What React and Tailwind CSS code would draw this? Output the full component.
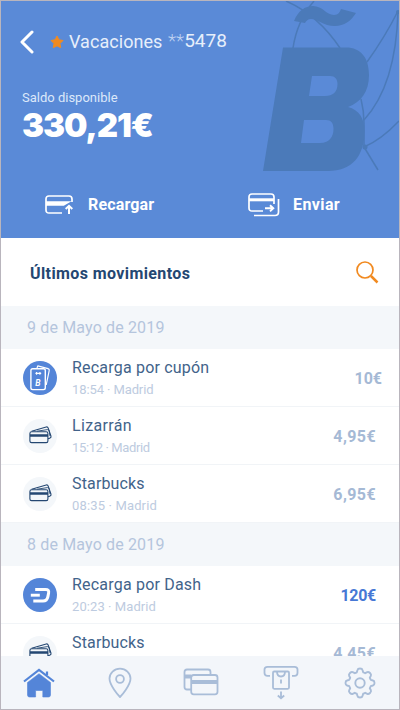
import React from "react";

const movements = [
  {
    date: "9 de Mayo de 2019",
    items: [
      { name: "Recarga por cupón", nameClass: "tracking-[0.2px]", info: "18:54 · Madrid", infoClass: "tracking-[-0.1px]", amount: "10€", icon: "coupon", amountClass: "text-[#a5b9d5] mr-[17px]" },
      { name: "Lizarrán", nameClass: "tracking-[0.35px]", info: "15:12 · Madrid", infoClass: "tracking-[-0.36px]", amount: "4,95€", icon: "card", amountClass: "text-[#a5b9d5] mr-[23px] tracking-[0.4px]" },
      { name: "Starbucks", nameClass: "tracking-[0.15px]", info: "08:35 · Madrid", infoClass: "tracking-[0.15px]", amount: "6,95€", icon: "card", amountClass: "text-[#a5b9d5] mr-[23px] tracking-[0.4px]" },
    ],
  },
  {
    date: "8 de Mayo de 2019",
    items: [
      { name: "Recarga por Dash", nameClass: "tracking-[0.2px]", info: "20:23 · Madrid", infoClass: "tracking-[0.08px]", amount: "120€", icon: "dash", amountClass: "text-[#4778d5] mr-[23px] tracking-[-0.3px]" },
      { name: "Starbucks", nameClass: "tracking-[0.15px]", info: "19:10 · Madrid", infoClass: "tracking-[0px]", amount: "4,45€", icon: "card", amountClass: "text-[#a5b9d5] mr-[23px] tracking-[0.4px]" },
    ],
  },
];

const CouponIcon = () => (
  <svg width="34" height="34" viewBox="0 0 34 34" fill="none" stroke="#fff" strokeLinejoin="round">
    <rect x="7.9" y="7.8" width="14.4" height="20.8" rx="1.8" strokeWidth="1.4" />
    <path d="M14 7L14.8 4.9L25 7.6Q26.6 8.2 26.2 9.7L23.2 24" strokeWidth="1.2" />
    <path d="M12.4 12.4H18.2M13.6 11V13.8M16.9 11V13.8" strokeWidth="1.1" />
    <text x="12.3" y="25" fill="#fff" stroke="none" className="text-[8.5px] font-bold italic">B</text>
  </svg>
);

const CardIcon = () => (
  <svg width="34" height="34" viewBox="0 0 34 34" fill="none" stroke="#244772" strokeWidth="1.1" strokeLinejoin="round">
    <path d="M8.6 12.2L23.2 8Q24.7 7.6 25.2 9.1L28 17.2Q28.4 18.7 26.7 19.2L25 19.8" />
    <path d="M14 12.2L24.5 10.6Q26 10.5 26.2 12L27 17" strokeWidth="0.9" />
    <rect x="6.9" y="12.7" width="18" height="10.9" rx="1.7" fill="#f4f7fa" />
    <path d="M7 16.5H25" strokeWidth="2.5" />
  </svg>
);

const DashIcon = () => (
  <svg width="34" height="34" viewBox="0 0 34 34" fill="none" stroke="#fff" strokeWidth="3" strokeLinejoin="round">
    <path d="M12.2 11.4H22.4Q26.3 11.4 25.6 15L24.9 18.6Q24 23 20 23H10.3" />
    <path d="M7.8 17.2H16.8" strokeWidth="2.9" />
  </svg>
);

const icons = { coupon: CouponIcon, card: CardIcon, dash: DashIcon };

const Pattern = () => (
  <svg className="absolute right-0 top-0" width="137" height="180" viewBox="0 0 137 180" fill="none">
    <g stroke="#4b7ab9" strokeWidth="1.5">
      <path d="M24 0Q56 14 78 47" />
      <path d="M52 0Q35 20 31 47" />
      <path d="M136 10Q123 36 105 61" />
      <path d="M136 10Q134 84 102 119" />
      <path d="M99 98Q102 110 102 122V146Q119 139 137 120" />
      <path d="M102 146L116 169" />
    </g>
    <circle cx="136" cy="11" r="2" fill="#4b7ab9" />
    <circle cx="103" cy="146" r="2.5" fill="#4b7ab9" />
    <g fill="#4b7ab9">
      <path d="M32 20C36 10 43 5 51 5C61 5 64 14 72 14C76 14 78 11 79 8L94 12C89 20 82 25 73 25C61 25 56 18 49 18C46 18 44 20 43 22Z" />
      <path fillRule="evenodd" d="M21 46.500H84C99 46.500 107 57 107 74C107 91 99 101 86 106C97 109 102.500 117 102.500 130C102.500 155 90 170 66 170H1ZM50 75L47 95H63C71 95 75.500 91 75.500 83C75.500 78 73 75 68 75ZM42 119L39 142H58C67 142 71.500 136 71.500 128C71.500 122 69 119 64 119Z" />
    </g>
  </svg>
);

const Header = () => (
  <header className="relative h-[237px] bg-[#5a8ad7] text-white">
    <Pattern />
    <div className="relative flex h-[81px] items-center pl-[19px]">
      <svg width="14" height="24" viewBox="0 0 14 24" fill="none" stroke="#fff" strokeWidth="3" strokeLinecap="round" strokeLinejoin="round">
        <path d="M12 2L2 12L12 22" />
      </svg>
      <svg className="ml-[16px]" width="14" height="14" viewBox="0 0 14 14" fill="#f18a20">
        <path d="M7 1L8.9 4.8L13 5.5L10 8.5L10.7 12.7L7 10.8L3.2 12.7L4 8.5L1 5.5L5.1 4.8Z" stroke="#f18a20" strokeLinejoin="round" />
      </svg>
      <h1 className="ml-[5px] w-[93px] whitespace-nowrap text-[18px] tracking-[0.05px] text-[#e7effb]">Vacaciones</h1>
      <span className="ml-[6px] whitespace-nowrap text-[19px] text-[#e7effb]">
        <span className="font-light text-[#bfd2f2]">**</span>5478
      </span>
    </div>
    <div className="relative pl-[21px] pt-[8px]">
      <p className="text-[13px] leading-4 text-[#dce8fa]">Saldo disponible</p>
      <p className="font-[Inter,sans-serif] text-[33px] font-black leading-[38px] tracking-[-1.05px]">330,21€</p>
    </div>
    <div className="relative mt-[42px] flex h-[38px] items-center pl-[44px] text-base font-bold">
      <svg width="28" height="20" viewBox="0 0 28 20" fill="none" stroke="#fff" strokeWidth="1.7">
        <path d="M17 18H4Q1 18 1 15V4Q1 1 4 1H24Q27 1 27 4V7" />
        <path d="M1 7.5H22L18.5 9.5H1" strokeWidth="2.4" />
        <path d="M24 19V11M20.7 14L24 10.8L27.3 14" strokeWidth="2" />
      </svg>
      <span className="ml-[15px] w-[67px] tracking-[0.15px]">Recargar</span>
      <svg className="ml-[93px]" width="32" height="24" viewBox="0 0 32 24" fill="none" stroke="#fff" strokeWidth="1.7">
        <path d="M15 18H4Q1 18 1 15V4Q1 1 4 1H23Q26 1 26 4V11M30.500 6V19Q30.500 22.500 27 22.500H6" />
        <path d="M1 6.8H26" strokeWidth="3" />
        <path d="M17 15.3H25M22 12.2L25.3 15.3L22 18.4" strokeWidth="1.9" />
      </svg>
      <span className="ml-[13px] tracking-[0.4px]">Enviar</span>
    </div>
  </header>
);

const Movement = ({ item }) => {
  const Icon = icons[item.icon];
  const isBlue = item.icon !== "card";

  return (
    <li className="flex h-[58px] items-center border-b border-[#f1f4f7] pl-[22px]">
      <div className={isBlue ? "size-[34px] rounded-full bg-[#5485d8]" : "size-[34px] rounded-full bg-[#f4f7fa]"}>
        <Icon />
      </div>
      <div className="ml-[15px] flex-1 pt-px">
        <p className={`text-base leading-[22px] text-[#42638a] ${item.nameClass}`}>{item.name}</p>
        <p className={`text-[13px] leading-[21px] text-[#bdcbe0] ${item.infoClass}`}>{item.info}</p>
      </div>
      <span className={`pt-[2px] text-base font-bold ${item.amountClass}`}>{item.amount}</span>
    </li>
  );
};

const HomeIcon = () => (
  <svg width="32" height="32" viewBox="0 0 32 32" fill="none" stroke="#5485d8">
    <path d="M1 14.500L16 3L31 14.500M24 8V4.500" strokeWidth="2.2" />
    <path d="M4.500 15.500L16 6.700L27.500 15.500V28Q27.500 30 25.500 30H19.800V23.500H12.600V30H6.500Q4.500 30 4.500 28Z" fill="#5485d8" strokeWidth="0.6" />
  </svg>
);

const PinIcon = () => (
  <svg width="24" height="32" viewBox="0 0 24 32" fill="none" stroke="currentColor" strokeWidth="1.8">
    <path d="M12 30C10 28 1.500 18 1.500 11.500A10.500 9.800 0 0 1 22.500 11.500C22.500 18 14 28 12 30Z" strokeLinejoin="round" />
    <circle cx="12" cy="12" r="3.900" />
  </svg>
);

const WalletIcon = () => (
  <svg width="36" height="30" viewBox="0 0 36 30" fill="none" stroke="currentColor" strokeWidth="1.8">
    <path d="M8 21.500H4Q1.500 21.500 1.500 19V4Q1.500 1.500 4 1.500H25Q27.500 1.500 27.500 4V7" />
    <path d="M1.500 8.500H8" strokeWidth="4" />
    <rect x="8.200" y="7" width="26.300" height="19.300" rx="2.500" />
    <path d="M8 14H34.500" strokeWidth="4" />
  </svg>
);

const CashIcon = () => (
  <svg width="36" height="36" viewBox="0 0 36 36" fill="none" stroke="currentColor" strokeWidth="1.8">
    <path d="M7 10.800H4.500Q1.500 10.800 1.500 8V4.500Q1.500 1.800 4.500 1.800H31.500Q34.500 1.800 34.500 4.500V8Q34.500 10.800 31.500 10.800H29" />
    <rect x="10" y="6.500" width="16" height="17.300" rx="1.200" />
    <path d="M14 6.500Q14 11.500 18 11.500T22 6.500M18 14.500V18.500M18 26.500V33M14.800 30.500L18 33.200L21.200 30.500" />
  </svg>
);

const GearIcon = () => (
  <svg width="32" height="32" viewBox="0 0 32 32" fill="none" stroke="currentColor" strokeWidth="1.9" strokeLinejoin="round">
    <path d="M13.500 3Q13.800 1.500 16 1.500T18.500 3L19.200 5.300Q20.500 5.700 21.200 6.200L23.300 5.100Q24.500 4.500 26 6T26.900 8.700L25.800 10.800Q26.300 11.700 26.700 12.800L29 13.500Q30.500 13.800 30.500 16T29 18.500L26.700 19.200Q26.300 20.300 25.800 21.200L26.900 23.300Q27.500 24.500 26 26T23.300 26.900L21.200 25.800Q20.300 26.300 19.200 26.700L18.500 29Q18.200 30.500 16 30.500T13.500 29L12.800 26.700Q11.700 26.300 10.800 25.800L8.700 26.900Q7.500 27.500 6 26T5.100 23.300L6.200 21.200Q5.700 20.300 5.300 19.200L3 18.500Q1.500 18.200 1.500 16T3 13.500L5.300 12.800Q5.700 11.700 6.200 10.800L5.100 8.700Q4.500 7.500 6 6T8.700 5.100L10.800 6.200Q11.700 5.700 12.800 5.300Z" />
    <circle cx="16" cy="16" r="4.700" />
  </svg>
);

const TabBar = () => (
  <nav className="absolute inset-x-0 bottom-0 flex h-[53px] items-center justify-between bg-[#f3f6fa] pl-[22px] pr-[23px] text-[#a9bdd8]">
    <HomeIcon />
    <div className="ml-[8px]">
      <PinIcon />
    </div>
    <div className="ml-[6px]">
      <WalletIcon />
    </div>
    <CashIcon />
    <GearIcon />
  </nav>
);

const App = () => {
  return (
    <div className="relative h-[710px] w-[400px] overflow-hidden border border-[#b9b5bd] bg-white font-[Roboto,sans-serif]">
      <Header />
      <div className="flex h-[68px] items-center justify-between pl-[29px] pr-[20px] pt-px">
        <h2 className="pt-[2px] text-base font-bold tracking-[0.4px] text-[#244772]">Últimos movimientos</h2>
        <svg width="23" height="23" viewBox="0 0 23 23" fill="none" stroke="#f18a20" strokeWidth="1.7">
          <circle cx="9" cy="9" r="8" />
          <path d="M15 15L21.5 21.5" strokeWidth="2.5" />
        </svg>
      </div>
      {movements.map((group) => (
        <section key={group.date}>
          <h3 className="flex h-[43px] items-center bg-[#f4f7fa] pl-[26px] text-base tracking-[0.15px] text-[#b5c5dd]">{group.date}</h3>
          <ul>
            {group.items.map((item) => (
              <Movement key={item.name} item={item} />
            ))}
          </ul>
        </section>
      ))}
      <TabBar />
    </div>
  );
};

export default App;
